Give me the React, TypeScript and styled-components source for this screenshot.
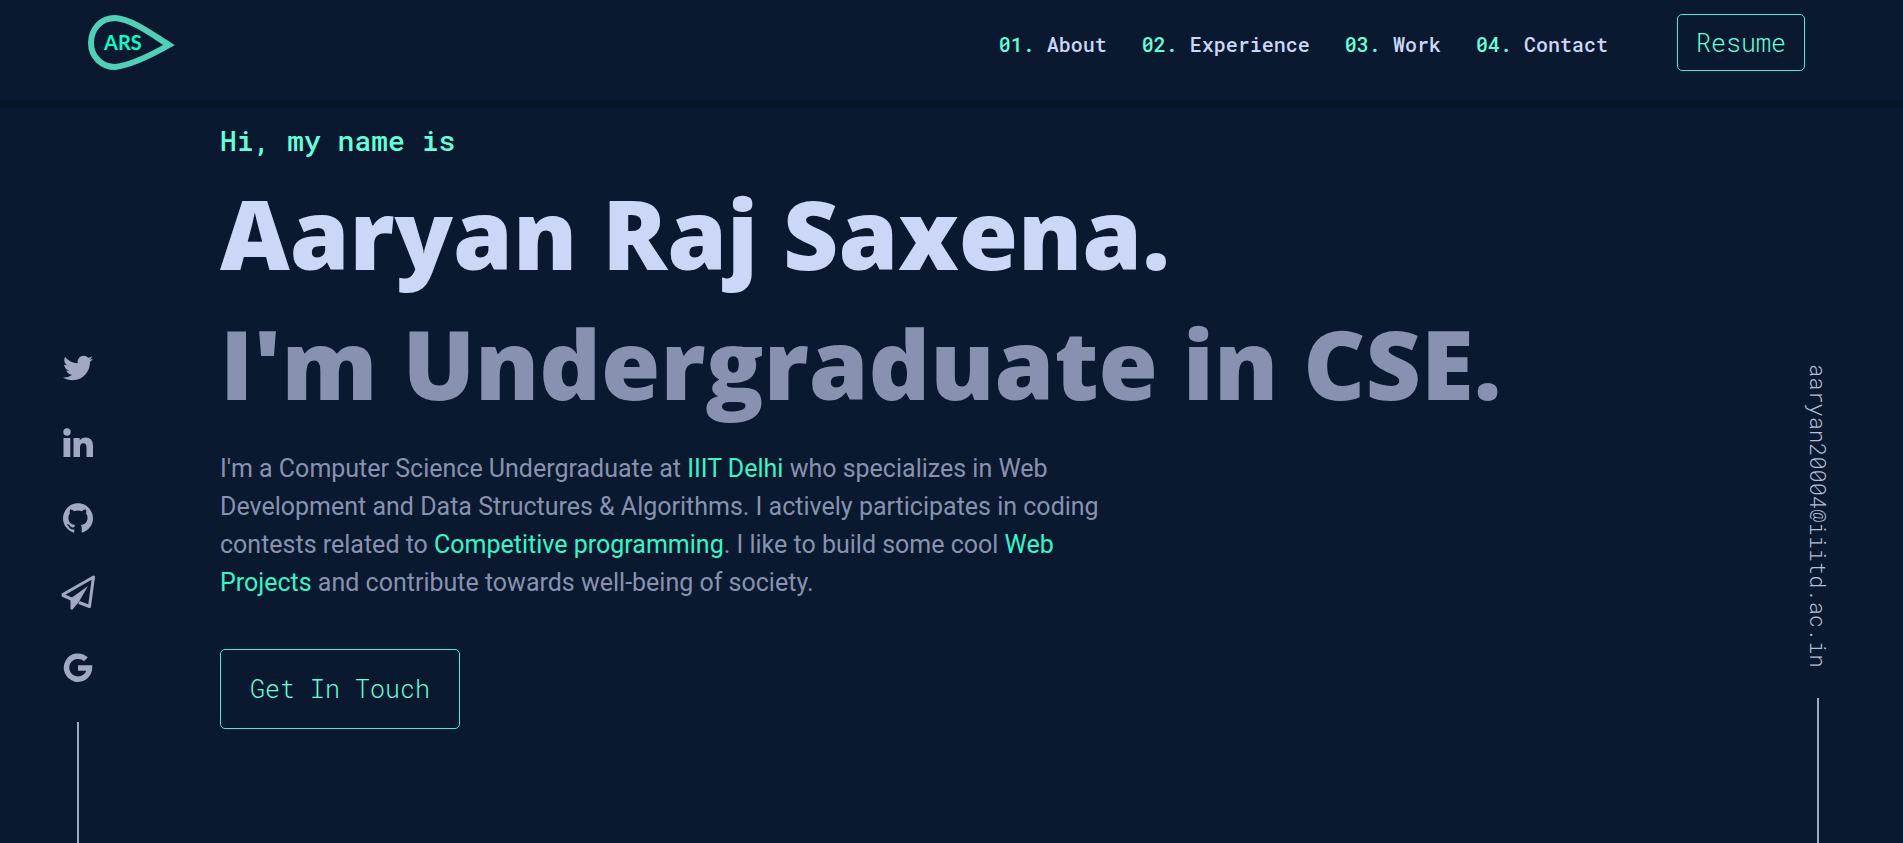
import React from "react";
import styled, { createGlobalStyle } from "styled-components";
import { FaTwitter } from "react-icons/fa";
import { SiGithub } from "react-icons/si";

const mono = `"Roboto Mono", "DejaVu Sans Mono", "Liberation Mono", monospace`;
const sans = `Roboto, "Liberation Sans", sans-serif`;
const display = `"Segoe UI Black", "Open Sans", "Noto Sans", sans-serif`;

const color = {
  navy: "#0a192f",
  line: "#091628",
  green: "#64ffda",
  accent: "#38f5c8",
  light: "#ccd6f6",
  slate: "#8892b0",
  icon: "#a0a8c4",
  email: "#b4bdd9",
};

const GlobalStyle = createGlobalStyle`
  *, *::before, *::after { box-sizing: border-box; }
  body { margin: 0; background: ${color.navy}; font-family: ${sans}; }
  a { text-decoration: none; }
`;

const Page = styled.div`
  min-height: 100vh;
  display: flex;
  flex-direction: column;
`;

const Header = styled.header`
  display: flex;
  justify-content: space-between;
  align-items: flex-start;
  padding: 14px 98px 0 84px;
  height: 108px;
  border-bottom: 8px solid ${color.line};
`;

const HeaderRight = styled.div`
  display: flex;
  align-items: center;
  gap: 69px;
`;

const NavList = styled.ol`
  display: flex;
  gap: 35px;
  margin: 0;
  padding: 3px 0 0;
  list-style: none;
`;

const NavLink = styled.a`
  font: 500 20px/24px ${mono};
  color: ${color.light};
`;

const NavNumber = styled.span`
  color: ${color.green};
`;

const OutlineButton = styled.button<{ $large?: boolean }>`
  height: ${(p) => (p.$large ? 80 : 57)}px;
  padding: 0 ${(p) => (p.$large ? 29 : 18)}px;
  border: 1px solid ${color.accent};
  border-radius: 5px;
  background: transparent;
  color: ${color.green};
  font: 300 25px/32px ${mono};
  cursor: pointer;
`;

const Body = styled.div`
  flex: 1;
  display: grid;
  grid-template-columns: 156px 1fr 170px;
`;

const Rail = styled.aside`
  display: flex;
  flex-direction: column;
  align-items: center;
  justify-content: flex-end;
`;

const SocialList = styled.ul`
  display: flex;
  flex-direction: column;
  gap: 39px;
  margin: 0;
  padding: 0 0 36px;
  list-style: none;
`;

const SocialLink = styled.a`
  display: grid;
  place-items: center;
  width: 36px;
  height: 36px;
  color: ${color.icon};
`;

const RailLine = styled.div<{ $height: number }>`
  width: 2px;
  height: ${(p) => p.$height}px;
  background: ${color.icon};
`;

const Email = styled.a`
  writing-mode: vertical-rl;
  margin-bottom: 30px;
  font: 300 22px/24px ${mono};
  color: ${color.email};
`;

const Hero = styled.main`
  display: flex;
  flex-direction: column;
  align-items: flex-start;
  padding: 13px 0 40px 64px;
`;

const Greeting = styled.p`
  margin: 0 0 7px;
  font: 500 28px/40px ${mono};
  color: ${color.green};
`;

const Title = styled.h1<{ $muted?: boolean }>`
  margin: 0;
  font: 800 96px/130px ${display};
  color: ${(p) => (p.$muted ? color.slate : color.light)};
  white-space: nowrap;
`;

const Bio = styled.p`
  max-width: 890px;
  margin: 22px 0 47px;
  font: 400 25px/38px ${sans};
  color: ${color.slate};
`;

const BioLink = styled.a`
  color: ${color.accent};
`;

const Logo = () => (
  <svg width="94" height="57" viewBox="84 14 94 57" role="img" aria-label="ARS">
    <path
      d="M115 18 C101 18 91 29 91 43 C91 57 102 67 115 67 C132 65 155 53 169 45 C153 35 132 19 115 18 Z"
      fill="none"
      stroke="#50d0b8"
      strokeWidth="6"
    />
    <text x="104" y="50" fontFamily="Lato, sans-serif" fontWeight="700" fontSize="20" fill="#0bfbc9">
      ARS
    </text>
  </svg>
);

const LinkedIn = () => (
  <svg width="30" height="30" viewBox="0 0 30 30" aria-hidden="true" fill="currentColor">
    <circle cx="4" cy="4" r="3.700" />
    <path d="M0.500 10 H7.300 V29 H0.500 Z" />
    <path d="M10.500 10 H16.700 V12.600 C18 10.500 20 9.500 22.600 9.500 C28 9.500 30 13 30 18.200 V29 H23.500 V19.400 C23.500 17 22.800 15.200 20.600 15.200 C18 15.200 17 17 17 19.400 V29 H10.500 Z" />
  </svg>
);

const PaperPlane = () => (
  <svg width="36" height="36" viewBox="0 0 36 36" aria-hidden="true">
    <path d="M2 20 L33.500 2 L29.500 31.500 L19 27.500 M11.500 24 L2 20" fill="none" stroke="currentColor" strokeWidth="3" strokeLinejoin="round" />
    <path d="M10.500 23.500 L28 11 L18.500 27.500 L12 35 L10.500 34 Z" fill="currentColor" />
  </svg>
);

const GoogleG = () => (
  <svg width="30" height="30" viewBox="0 0 30 30" aria-hidden="true">
    <path
      d="M22.900 6.300 A11.500 11.500 0 1 0 26.500 15 H15"
      fill="none"
      stroke="currentColor"
      strokeWidth="5.500"
    />
  </svg>
);

const nav = ["About", "Experience", "Work", "Contact"];

const socials = [
  { name: "Twitter", icon: <FaTwitter size={30} /> },
  { name: "LinkedIn", icon: <LinkedIn /> },
  { name: "GitHub", icon: <SiGithub size={30} /> },
  { name: "Telegram", icon: <PaperPlane /> },
  { name: "Google", icon: <GoogleG /> },
];

export default function App() {
  return (
    <Page>
      <GlobalStyle />
      <Header>
        <a href="#home"><Logo /></a>
        <HeaderRight>
          <nav>
            <NavList>
              {nav.map((label, i) => (
                <li key={label}>
                  <NavLink href={`#${label.toLowerCase()}`}>
                    <NavNumber>0{i + 1}.</NavNumber> {label}
                  </NavLink>
                </li>
              ))}
            </NavList>
          </nav>
          <OutlineButton type="button">Resume</OutlineButton>
        </HeaderRight>
      </Header>
      <Body>
        <Rail>
          <SocialList>
            {socials.map((s) => (
              <li key={s.name}>
                <SocialLink href={`#${s.name.toLowerCase()}`} aria-label={s.name}>{s.icon}</SocialLink>
              </li>
            ))}
          </SocialList>
          <RailLine $height={121} />
        </Rail>
        <Hero>
          <Greeting>Hi, my name is</Greeting>
          <Title>Aaryan Raj Saxena.</Title>
          <Title as="h2" $muted>I'm Undergraduate in CSE.</Title>
          <Bio>
            I'm a Computer Science Undergraduate at <BioLink href="#iiitd">IIIT Delhi</BioLink> who
            specializes in Web Development and Data Structures &amp; Algorithms. I actively
            participates in coding contests related to{" "}
            <BioLink href="#cp">Competitive programming</BioLink>. I like to build some cool{" "}
            <BioLink href="#projects">Web Projects</BioLink> and contribute towards well-being of
            society.
          </Bio>
          <OutlineButton type="button" $large>Get In Touch</OutlineButton>
        </Hero>
        <Rail>
          <Email href="mailto:aaryan20004@iiitd.ac.in">aaryan20004@iiitd.ac.in</Email>
          <RailLine $height={145} />
        </Rail>
      </Body>
    </Page>
  );
}
